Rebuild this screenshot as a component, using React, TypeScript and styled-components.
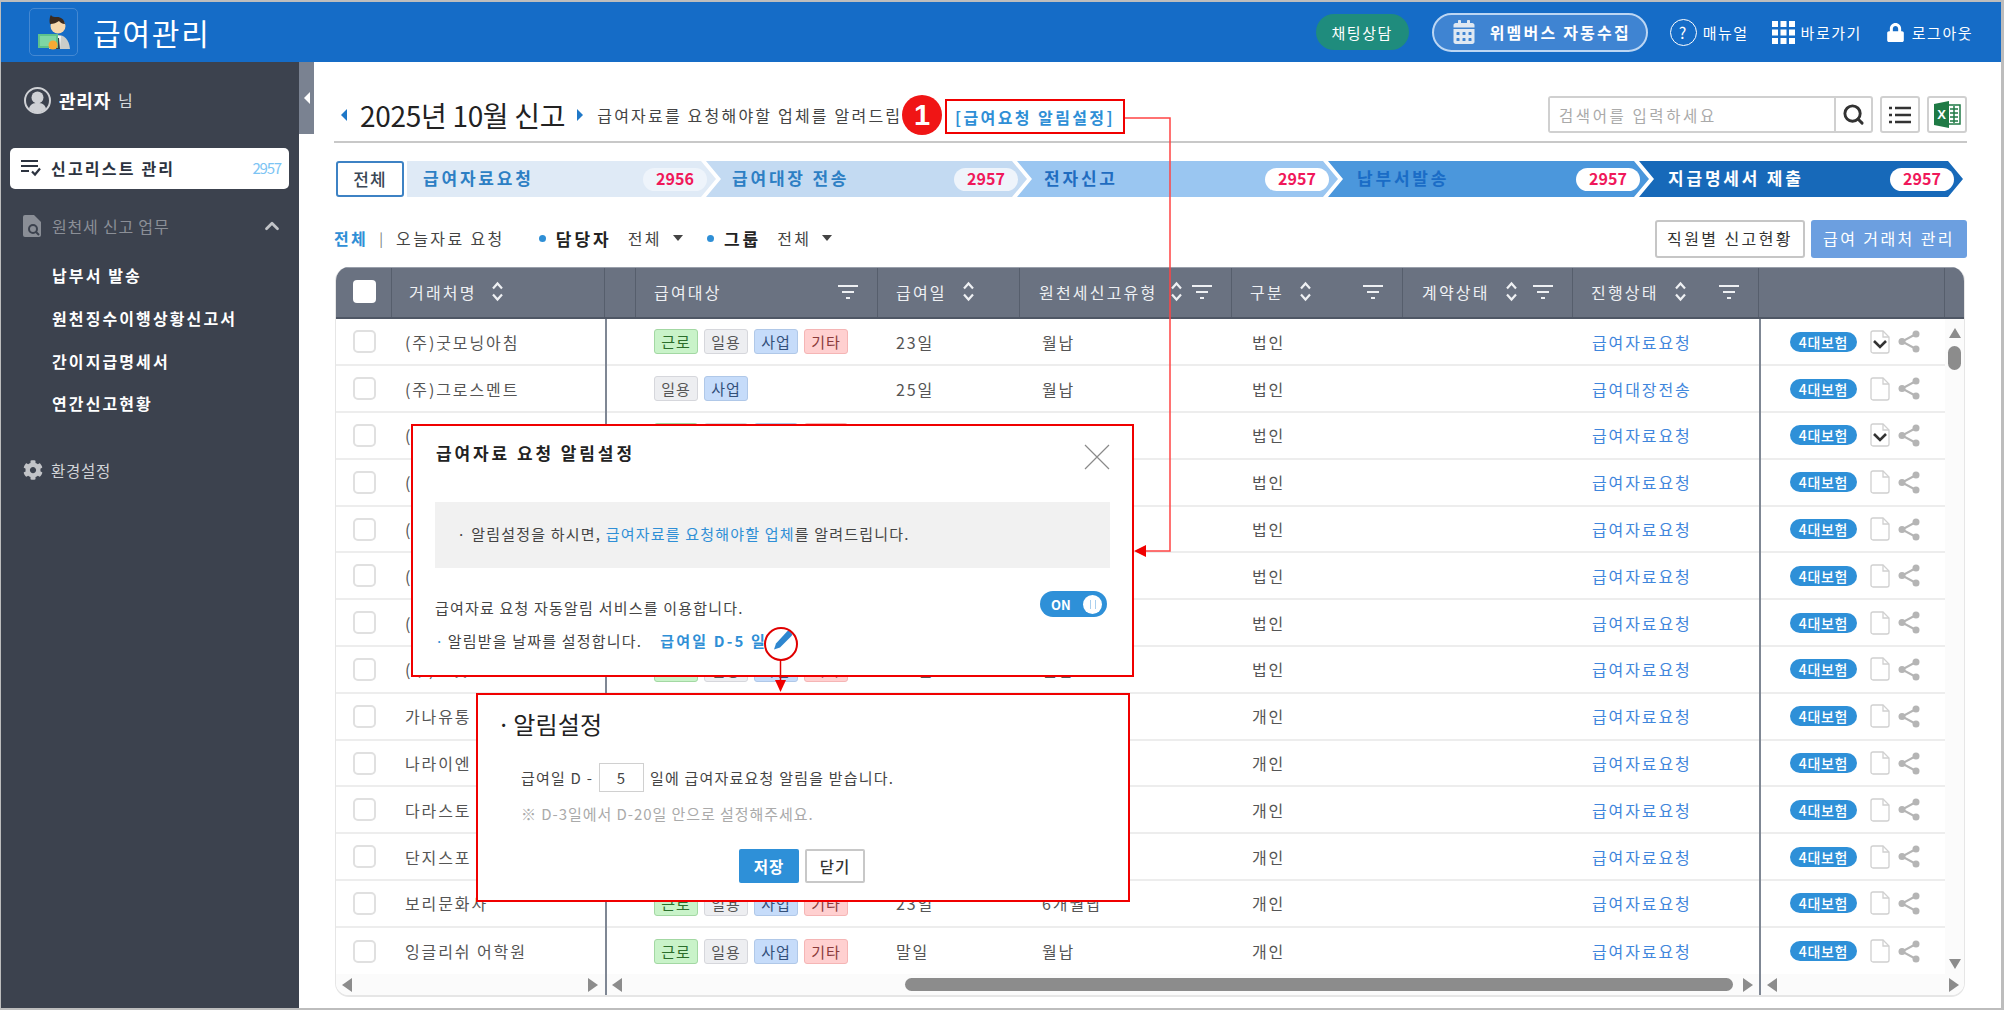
import React from "react";
import styled, { createGlobalStyle } from "styled-components";
import { FaCalendarAlt, FaCog, FaLock } from "react-icons/fa";
import { ChevronUp, Search } from "lucide-react";

const Global = createGlobalStyle`
  html, body { margin: 0; padding: 0; background: #bdbdbd; }
  * { box-sizing: border-box; }
  body { font-family: "Noto Sans CJK KR", "Noto Sans", sans-serif; color: #444; }
`;

const Page = styled.div`
  position: relative;
  width: 2004px;
  height: 1010px;
  padding: 2px 3px 2px 1px;
  overflow: hidden;
  display: flex;
  flex-direction: column;
`;

/* ---------- header ---------- */
const Header = styled.header`
  height: 60px;
  flex: none;
  background: #156cc7;
  display: flex;
  align-items: center;
  padding-left: 28px;
  color: #fff;
`;
const LogoBox = styled.div`
  width: 49px;
  height: 48px;
  border: 1.5px solid #4488d2;
  border-radius: 5px;
  display: flex;
  align-items: center;
  justify-content: center;
`;
const AppTitle = styled.h1`
  margin: 0 0 0 15px;
  font-size: 30px;
  font-weight: 400;
  letter-spacing: 1.8px;
  flex: 1;
`;
const ChatPill = styled.div`
  width: 93px;
  height: 36px;
  border-radius: 18px;
  background: #1f8c7d;
  font-size: 15px;
  letter-spacing: 1.6px;
  display: flex;
  align-items: center;
  justify-content: center;
`;
const CollectButton = styled.div`
  width: 216px;
  height: 39px;
  margin-left: 23px;
  border: 2px solid #bcd6f3;
  border-radius: 20px;
  background: #3f84d2;
  font-size: 16px;
  font-weight: 700;
  letter-spacing: 2.2px;
  white-space: nowrap;
  display: flex;
  align-items: center;
  padding-left: 18px;
  gap: 14px;
`;
const HeaderLink = styled.div<{ $ml: number; $gap: number }>`
  margin-left: ${(p) => p.$ml}px;
  display: flex;
  align-items: center;
  gap: ${(p) => p.$gap}px;
  font-size: 15px;
  letter-spacing: 1.5px;
`;
const HelpCircle = styled.span`
  width: 27px;
  height: 27px;
  border: 1.5px solid #fff;
  border-radius: 50%;
  display: flex;
  align-items: center;
  justify-content: center;
  font-size: 16px;
`;
const HeaderEnd = styled.div`
  width: 28px;
`;

/* ---------- frame ---------- */
const Body = styled.div`
  flex: 1;
  display: flex;
  min-height: 0;
`;
const Sidebar = styled.aside`
  width: 298px;
  flex: none;
  background: #3c424e;
  color: #fff;
  display: flex;
  flex-direction: column;
`;
const UserRow = styled.div`
  margin: 23px 0 0 23px;
  height: 30px;
  display: flex;
  align-items: center;
  gap: 8px;
  b { font-size: 18px; font-weight: 700; letter-spacing: 0.8px; }
  span { color: #d8dade; font-size: 16px; margin-left: -1px; }
`;
const ActiveItem = styled.div`
  margin: 33px 0 0 9px;
  width: 279px;
  height: 41px;
  padding: 0 8px 2px 11px;
  border-radius: 5px;
  background: #fff;
  color: #2c3340;
  display: flex;
  align-items: center;
  gap: 10px;
  font-size: 16px;
  font-weight: 700;
  letter-spacing: 2.2px;
`;
const CountText = styled.span`
  margin-left: auto;
  font-size: 15px;
  font-weight: 400;
  letter-spacing: -1.2px;
  color: #7cc4f4;
`;
const SectionRow = styled.div`
  margin: 25px 0 0 22px;
  width: 260px;
  height: 24px;
  display: flex;
  align-items: center;
  gap: 11px;
  font-size: 16px;
  letter-spacing: 0.8px;
  color: #8b8f97;
  svg:last-child { margin-left: auto; color: #c2c4c8; }
`;
const SubList = styled.div`
  margin: 16px 0 0 51px;
  display: flex;
  flex-direction: column;
`;
const SubItem = styled.div`
  height: 42.7px;
  display: flex;
  align-items: center;
  font-size: 16px;
  font-weight: 700;
  letter-spacing: 2.1px;
`;
const SettingRow = styled.div`
  margin: 33px 0 0 22px;
  height: 24px;
  display: flex;
  align-items: center;
  gap: 8px;
  font-size: 15.5px;
  letter-spacing: 0.7px;
  color: #d2d4d8;
  svg { color: #c2c4c8; }
`;

/* ---------- main ---------- */
const Main = styled.main`
  position: relative;
  flex: 1;
  background: #fff;
  padding: 0 34px 0 35px;
  display: flex;
  flex-direction: column;
`;
const CollapseTab = styled.div`
  position: absolute;
  left: 0;
  top: 0;
  width: 15px;
  height: 72px;
  background: #7a8291;
  display: flex;
  align-items: center;
  justify-content: center;
`;
const TitleBar = styled.div`
  height: 81px;
  flex: none;
  border-bottom: 2px solid #c8c8c8;
  display: flex;
  align-items: flex-end;
  padding-bottom: 8px;
`;
const MonthNav = styled.div`
  height: 37px;
  display: flex;
  align-items: center;
  padding-left: 7px;
`;
const Triangle = styled.span<{ $dir: "l" | "r"; $color?: string; $h?: number; $w?: number }>`
  display: inline-block;
  width: 0;
  height: 0;
  flex: none;
  border-top: ${(p) => (p.$h ?? 12) / 2}px solid transparent;
  border-bottom: ${(p) => (p.$h ?? 12) / 2}px solid transparent;
  ${(p) => (p.$dir === "l" ? "border-right" : "border-left")}: ${(p) => p.$w ?? 6}px solid ${(p) => p.$color ?? "#1f78c8"};
`;
const MonthTitle = styled.div`
  font-size: 28px;
  color: #222;
  margin: 0 12px 0 13px;
  letter-spacing: -0.3px;
`;
const SubTitle = styled.div`
  margin-left: 14px;
  font-size: 16px;
  letter-spacing: 2.2px;
  white-space: nowrap;
  color: #444;
`;
const SearchArea = styled.div`
  margin-left: auto;
  display: flex;
  gap: 7px;
  height: 37px;
`;
const SearchBox = styled.div`
  width: 325px;
  border: 2px solid #d0d0d0;
  border-radius: 3px;
  display: flex;
`;
const SearchInput = styled.input`
  flex: 1;
  min-width: 0;
  border: 0;
  outline: 0;
  padding: 0 0 0 9px;
  font: inherit;
  font-size: 15.5px;
  letter-spacing: 2.6px;
  &::placeholder { color: #aaa; }
`;
const SearchBtn = styled.div`
  width: 37px;
  border-left: 2px solid #d0d0d0;
  display: flex;
  align-items: center;
  justify-content: center;
  color: #333;
`;
const IconBtn = styled.div`
  width: 40px;
  border: 2px solid #d0d0d0;
  border-radius: 3px;
  display: flex;
  align-items: center;
  justify-content: center;
`;

const Steps = styled.div`
  margin: 18px 0 0 2px;
  height: 36px;
  flex: none;
  display: flex;
`;
const AllBtn = styled.div`
  width: 68px;
  margin-right: 3px;
  padding-bottom: 2px;
  border: 2px solid #3d82c4;
  border-radius: 3px;
  display: flex;
  align-items: center;
  justify-content: center;
  font-size: 17px;
  font-weight: 500;
  letter-spacing: 1.2px;
  color: #3a4756;
`;
const Step = styled.div<{ $bg: string; $fg: string; $w: number; $first?: boolean; $pl: number; $last?: boolean }>`
  width: ${(p) => p.$w}px;
  flex: none;
  margin-right: ${(p) => (p.$last ? 0 : -10)}px;
  background: ${(p) => p.$bg};
  color: ${(p) => p.$fg};
  clip-path: ${(p) =>
    p.$first
      ? "polygon(0 0, calc(100% - 15px) 0, 100% 50%, calc(100% - 15px) 100%, 0 100%)"
      : "polygon(0 0, calc(100% - 15px) 0, 100% 50%, calc(100% - 15px) 100%, 0 100%, 15px 50%)"};
  display: flex;
  align-items: center;
  justify-content: space-between;
  padding: 0 9px 0 ${(p) => p.$pl}px;
  font-size: 17px;
  font-weight: 700;
  letter-spacing: 2.8px;
`;
const StepLabel = styled.span`
  margin-bottom: 4px;
`;
const StepBadge = styled.span<{ $soft?: boolean }>`
  width: 64px;
  height: 23px;
  padding-bottom: 2px;
  border-radius: 12px;
  background: ${(p) => (p.$soft ? "#eef4fb" : "#fff")};
  color: #f0185a;
  font-size: 16px;
  font-weight: 700;
  letter-spacing: 0;
  display: flex;
  align-items: center;
  justify-content: center;
`;

const FilterBar = styled.div`
  margin-top: 22px;
  height: 38px;
  flex: none;
  display: flex;
  align-items: center;
  font-size: 16px;
  letter-spacing: 2.4px;
  white-space: nowrap;
  color: #444;
`;
const FilterAll = styled.span`
  color: #2f8fd6;
  font-weight: 700;
`;
const FilterSep = styled.span`
  margin: 0 13px 0 11px;
  color: #777;
  font-size: 14px;
  letter-spacing: 0;
`;
const Dot = styled.span<{ $ml: number }>`
  width: 7px;
  height: 7px;
  margin: 0 10px 0 ${(p) => p.$ml}px;
  border-radius: 50%;
  background: #2f8fd6;
`;
const FilterKey = styled.b`
  color: #222;
  font-size: 17px;
  font-weight: 700;
  letter-spacing: 3px;
`;
const FilterVal = styled.span`
  margin-left: 16px;
  display: flex;
  align-items: center;
  gap: 11px;
`;
const Caret = styled.i`
  width: 0;
  height: 0;
  border-left: 5px solid transparent;
  border-right: 5px solid transparent;
  border-top: 6px solid #444;
`;
const OutlineBtn = styled.div`
  margin: 2px 0 0 auto;
  width: 150px;
  height: 38px;
  padding-bottom: 2px;
  border: 2px solid #c6c6c6;
  border-radius: 3px;
  display: flex;
  align-items: center;
  justify-content: center;
  color: #333;
`;
const SoftBtn = styled.div`
  margin: 2px 0 0 6px;
  width: 156px;
  height: 38px;
  padding-bottom: 2px;
  border-radius: 3px;
  background: #6c9fe0;
  color: #fff;
  display: flex;
  align-items: center;
  justify-content: center;
`;

/* ---------- table ---------- */
const Table = styled.div`
  position: relative;
  margin: 10px 0 0 1px;
  width: 1630px;
  height: 730px;
  flex: none;
  border: 1px solid #e6e6e6;
  border-top: 0;
  border-bottom-width: 2px;
  border-radius: 14px;
  overflow: hidden;
  display: flex;
  flex-direction: column;
`;
const HeadRow = styled.div`
  height: 52px;
  flex: none;
  display: grid;
  grid-template-columns: 56px 213px 31px 242px 142px 212px 171px 170px 186px 186px 19px;
  background: #6a7281;
  border-top: 1px solid #9aa0ab;
  border-bottom: 2px solid #4f5765;
  color: #eef0f3;
  font-size: 16px;
  letter-spacing: 2.2px;
`;
const HeadCell = styled.div<{ $pl?: number; $noline?: boolean }>`
  display: flex;
  align-items: center;
  padding: 0 0 2px ${(p) => p.$pl ?? 0}px;
  border-right: ${(p) => (p.$noline ? "0" : "1px solid #565e6c")};
  white-space: nowrap;
`;
const HeadCheck = styled.span`
  width: 23px;
  height: 23px;
  border-radius: 4px;
  background: #fff;
`;
const SortWrap = styled.span<{ $ml: number }>`
  margin-left: ${(p) => p.$ml}px;
  display: flex;
`;
const FilterWrap = styled.span`
  margin-left: auto;
  margin-right: 19px;
  display: flex;
`;
const BodyArea = styled.div`
  height: 655px;
  flex: none;
  display: flex;
  overflow: hidden;
`;
const Rows = styled.div`
  width: 1609px;
  flex: none;
  margin-top: 0.5px;
  display: flex;
  flex-direction: column;
`;
const Row = styled.div`
  height: 46.8px;
  flex: none;
  display: grid;
  grid-template-columns: 56px 213px 31px 242px 142px 212px 171px 170px 186px 186px;
  align-items: center;
  border-bottom: 2px solid #ededed;
  font-size: 16px;
  letter-spacing: 1.9px;
  color: #555;
  &:last-child { border-bottom: 0; }
`;
const Cell = styled.div<{ $pl?: number }>`
  display: flex;
  align-items: center;
  padding-left: ${(p) => p.$pl ?? 0}px;
  white-space: nowrap;
`;
const RowCheck = styled.span`
  width: 23px;
  height: 23px;
  border: 2px solid #e0e0e0;
  border-radius: 5px;
  background: #fff;
`;
const TagList = styled.div`
  display: flex;
  gap: 6px;
`;
const kinds: Record<string, [string, string, string]> = {
  근로: ["#c9f3c9", "#a3d8a3", "#2b6e2b"],
  일용: ["#edeef1", "#d6d7dc", "#555"],
  사업: ["#c6dcfa", "#b0c8e8", "#33507a"],
  기타: ["#ffd0d0", "#f5b5b5", "#8a3b3b"],
};
const Tag = styled.span<{ $k: string }>`
  width: 44px;
  height: 25px;
  border: 1.5px solid ${(p) => kinds[p.$k][1]};
  border-radius: 3px;
  background: ${(p) => kinds[p.$k][0]};
  color: ${(p) => kinds[p.$k][2]};
  font-size: 15px;
  letter-spacing: 1px;
  display: flex;
  align-items: center;
  justify-content: center;
`;
const StatusLink = styled.span`
  color: #3f86dc;
`;
const InsureBadge = styled.span`
  width: 67px;
  height: 20px;
  border-radius: 10px;
  background: #2e90d8;
  color: #fff;
  font-size: 14px;
  font-weight: 500;
  letter-spacing: 0.7px;
  display: flex;
  align-items: center;
  justify-content: center;
  margin-right: 13px;
`;
const ShareWrap = styled.span`
  margin-left: 8px;
  display: flex;
`;
const VScroll = styled.div`
  flex: 1;
  background: #fbfbfb;
  display: flex;
  flex-direction: column;
  align-items: center;
  padding: 9px 0 5px;
`;
const VThumb = styled.div`
  width: 13px;
  height: 24px;
  margin-top: 8px;
  border-radius: 7px;
  background: #8c8c8c;
`;
const VTriangle = styled.span<{ $down?: boolean }>`
  width: 0;
  height: 0;
  border-left: 6.5px solid transparent;
  border-right: 6.5px solid transparent;
  ${(p) => (p.$down ? "border-top" : "border-bottom")}: 10px solid #8c8c8c;
  ${(p) => (p.$down ? "margin-top: auto;" : "")}
`;
const HScroll = styled.div`
  flex: 1;
  display: grid;
  grid-template-columns: 269px 1154px 205px;
  background: #fbfbfb;
`;
const HSegment = styled.div<{ $pl: number; $pr: number }>`
  display: flex;
  align-items: center;
  justify-content: space-between;
  padding: 0 ${(p) => p.$pr}px 0 ${(p) => p.$pl}px;
`;
const HThumb = styled.div`
  width: 828px;
  height: 13px;
  margin-left: 283px;
  margin-right: 10px;
  border-radius: 7px;
  background: #8c8c8c;
`;
const Divider = styled.div<{ $left: number }>`
  position: absolute;
  top: 52px;
  bottom: 0;
  left: ${(p) => p.$left}px;
  width: 2px;
  background: #7f8794;
`;

/* ---------- dialogs ---------- */
const Dialog = styled.section<{ $l: number; $t: number; $w: number; $h: number }>`
  position: absolute;
  left: ${(p) => p.$l}px;
  top: ${(p) => p.$t}px;
  width: ${(p) => p.$w}px;
  height: ${(p) => p.$h}px;
  border: 2px solid #f00000;
  background: #fff;
  display: flex;
  flex-direction: column;
`;
const DialogHead = styled.div`
  height: 55px;
  padding: 6px 22px 0 23px;
  display: flex;
  align-items: center;
  justify-content: space-between;
`;
const DialogTitle = styled.h2`
  margin: 0 0 8px;
  font-size: 17px;
  font-weight: 700;
  letter-spacing: 2.9px;
  color: #222;
`;
const NoticeBox = styled.div`
  margin: 21px 22px 0;
  height: 66px;
  padding: 0 0 3px 22px;
  background: #f1f1f1;
  display: flex;
  align-items: center;
  font-size: 15px;
  letter-spacing: 1.2px;
  color: #444;
  em { font-style: normal; color: #2f8fd6; }
`;
const ServiceRow = styled.div`
  margin: 23px 25px 0 22px;
  height: 36px;
  display: flex;
  justify-content: space-between;
  font-size: 15px;
  letter-spacing: 1.2px;
  color: #444;
`;
const ServiceText = styled.span`
  margin-top: 6px;
`;
const Toggle = styled.div`
  width: 67px;
  height: 26px;
  border-radius: 13px;
  background: #2e90d8;
  color: #fff;
  font-size: 13px;
  font-weight: 700;
  letter-spacing: 0;
  display: flex;
  align-items: center;
  justify-content: space-between;
  padding: 0 3px 0 11px;
`;
const ToggleKnob = styled.span`
  width: 19px;
  height: 19px;
  border-radius: 50%;
  background: #fff;
  display: flex;
  align-items: center;
  justify-content: center;
  margin-right: 2px;
  &::after {
    content: "";
    width: 4px;
    height: 9px;
    border-left: 1px solid #a9cfee;
    border-right: 1px solid #a9cfee;
  }
`;
const DateRow = styled.div`
  margin: 0 22px;
  display: flex;
  align-items: center;
  font-size: 15px;
  letter-spacing: 1.2px;
  color: #444;
  height: 26px;
`;
const BulletDot = styled.span`
  color: #2f8fd6;
  margin-right: 3px;
`;
const DateValue = styled.b`
  margin-left: 18px;
  color: #2f8fd6;
  font-weight: 700;
  letter-spacing: 2.2px;
`;
const PencilWrap = styled.span`
  margin-left: 6px;
  display: flex;
`;
const SettingTitle = styled.h2`
  margin: 12px 0 0 19px;
  font-size: 24px;
  line-height: 34px;
  font-weight: 400;
  color: #222;
  letter-spacing: 0.2px;
  word-spacing: -3px;
`;
const SettingLine = styled.div`
  margin: 21px 0 0 43px;
  height: 30px;
  display: flex;
  align-items: center;
  gap: 6px;
  font-size: 15px;
  letter-spacing: 1.2px;
  color: #444;
`;
const NumberField = styled.span`
  width: 45px;
  height: 29px;
  border: 1.500px solid #d0d0d0;
  display: flex;
  align-items: center;
  justify-content: center;
`;
const SettingNote = styled.div`
  margin: 6px 0 0 43px;
  height: 30px;
  display: flex;
  align-items: center;
  font-size: 15px;
  letter-spacing: 0.95px;
  color: #aaa;
`;
const ButtonRow = styled.div`
  margin: 21px 0 0 261px;
  display: flex;
  gap: 6px;
`;
const SaveBtn = styled.div`
  width: 60px;
  height: 34px;
  border-radius: 2px;
  background: #2e90d8;
  color: #fff;
  font-size: 15.5px;
  font-weight: 700;
  letter-spacing: 1px;
  display: flex;
  align-items: center;
  justify-content: center;
`;
const CloseBtn = styled.div`
  width: 60px;
  height: 34px;
  border: 2px solid #c8c8c8;
  border-radius: 2px;
  color: #333;
  font-size: 15.5px;
  font-weight: 500;
  letter-spacing: 1px;
  display: flex;
  align-items: center;
  justify-content: center;
`;

/* ---------- annotations ---------- */
const NumberMark = styled.div`
  position: absolute;
  left: 902px;
  top: 95px;
  width: 40px;
  height: 40px;
  border-radius: 50%;
  background: #f01515;
  color: #fff;
  font-family: "Liberation Sans", sans-serif;
  font-size: 29px;
  font-weight: 700;
  display: flex;
  align-items: center;
  justify-content: center;
`;
const MarkBox = styled.div`
  position: absolute;
  left: 945px;
  top: 99px;
  width: 180px;
  height: 35px;
  border: 2.5px solid #f00000;
  background: #fff;
  color: #2f8fd6;
  font-size: 16px;
  font-weight: 700;
  letter-spacing: 2.4px;
  display: flex;
  align-items: center;
  justify-content: center;
  white-space: nowrap;
`;
const ConnectorLayer = styled.svg`
  position: absolute;
  inset: 0;
  pointer-events: none;
`;

/* ---------- icons ---------- */
const Logo = () => (
  <svg width="34" height="36" viewBox="0 0 34 36">
    <path d="M12 35c0-9 3-14 9-14s11 4 12 14z" fill="#c9ccc9" />
    <path d="M18 22h6l-1 13h-4z" fill="#f2f2f2" />
    <path d="M20 24h2l1 11h-4z" fill="#33404a" />
    <circle cx="21" cy="12" r="7.500" fill="#f6d7ad" />
    <path d="M13 10c-1-4 0-8 1-9 1 2 3 2 6 2 4 0 7 2 8 7-3 0-5-2-6-3-3 2-5 3-9 3z" fill="#3a2a20" />
    <rect x="1" y="20" width="20" height="14" fill="#5ec28c" />
    <rect x="3" y="22" width="16" height="10" fill="#7ed6a4" />
    <circle cx="16" cy="31" r="4.500" fill="#f6a933" />
  </svg>
);
const GridIcon = () => (
  <svg width="23" height="23" viewBox="0 0 23 23" fill="#fff">
    {[0, 8.5, 17].map((y) =>
      [0, 8.5, 17].map((x) => <rect key={`${x}-${y}`} x={x} y={y} width="6" height="6" />)
    )}
  </svg>
);
const UserIcon = () => (
  <svg width="27" height="27" viewBox="0 0 27 27">
    <circle cx="13.500" cy="13.500" r="12.500" fill="none" stroke="#cfd1d5" strokeWidth="2" />
    <circle cx="13.500" cy="10.500" r="6" fill="#cfd1d5" />
    <path d="M5 22c1-5 4-6 8.500-6s7.500 1 8.500 6c-2 2-5 3.500-8.500 3.500S7 24 5 22z" fill="#cfd1d5" />
  </svg>
);
const ListCheckIcon = () => (
  <svg width="20" height="18" viewBox="0 0 20 18" stroke="#2c3340" strokeWidth="2.200" fill="none">
    <path d="M0 2h17M0 7h17M0 12h8M11 12.500l3 3 5-6" />
  </svg>
);
const ReportIcon = () => (
  <svg width="18" height="22" viewBox="0 0 18 22">
    <path d="M0 2a2 2 0 0 1 2-2h9l7 7v13a2 2 0 0 1-2 2H2a2 2 0 0 1-2-2z" fill="#8a8e96" />
    <circle cx="10" cy="14" r="4" fill="none" stroke="#3c424e" strokeWidth="2" />
    <path d="M13 17l3 3" stroke="#3c424e" strokeWidth="2" />
  </svg>
);
const ListIcon = () => (
  <svg width="22" height="20" viewBox="0 0 22 20" stroke="#333" strokeWidth="2.400">
    <path d="M0 3h3M6 3h16M0 10h3M6 10h16M0 17h3M6 17h16" />
  </svg>
);
const ExcelIcon = () => (
  <svg width="27" height="27" viewBox="0 0 27 27">
    <rect x="13" y="4" width="13" height="19" fill="#fff" stroke="#1f7a45" strokeWidth="1.500" />
    <path d="M16 8h8M16 12h8M16 16h8M16 20h8M20 5v17" stroke="#1f7a45" strokeWidth="1.500" />
    <path d="M0 3l15-3v27L0 24z" fill="#1f7a45" />
    <text x="7.500" y="18" textAnchor="middle" fontSize="13" fontWeight="700" fontFamily="Liberation Sans" fill="#fff">X</text>
  </svg>
);
const SortIcon = () => (
  <svg width="13" height="21" viewBox="0 0 13 21" fill="none" stroke="#eef0f3" strokeWidth="2.200">
    <path d="M2 7.500l4.500-5 4.500 5M2 13.500l4.500 5 4.500-5" />
  </svg>
);
const FilterIcon = () => (
  <svg width="20" height="15" viewBox="0 0 20 15" stroke="#eef0f3" strokeWidth="2.200">
    <path d="M0 2h20M4 8h12M8 14h4" />
  </svg>
);
const DocIcon = ({ checked }: { checked?: boolean }) => (
  <svg width="20" height="24" viewBox="0 0 20 24" fill="none">
    <path d="M1 3a2 2 0 0 1 2-2h10l6 6v14a2 2 0 0 1-2 2H3a2 2 0 0 1-2-2z" stroke="#d0d0d0" strokeWidth="1.300" fill="#fff" />
    <path d="M13 1v6h6" stroke="#d0d0d0" strokeWidth="1.300" />
    {checked && <path d="M4 11l6 6 6-6" stroke="#333" strokeWidth="2.600" />}
  </svg>
);
const ShareIcon = () => (
  <svg width="22" height="23" viewBox="0 0 22 23" stroke="#b5b5b5" strokeWidth="2" fill="#b5b5b5">
    <path d="M18 4L4 11.500 18 19" fill="none" />
    <circle cx="18" cy="4" r="3.500" stroke="none" />
    <circle cx="4" cy="11.500" r="3.500" stroke="none" />
    <circle cx="18" cy="19" r="3.500" stroke="none" />
  </svg>
);
const PencilIcon = () => (
  <svg width="20" height="20" viewBox="0 0 20 20" fill="#2e86cf">
    <path d="M14 1.500a2 2 0 0 1 2.800 0l1.700 1.700a2 2 0 0 1 0 2.800L7 17.500 1 19.500l2-6z" />
  </svg>
);
const CloseIcon = () => (
  <svg width="26" height="26" viewBox="0 0 26 26" stroke="#8a8a8a" strokeWidth="1.200">
    <path d="M1 1l24 24M25 1L1 25" />
  </svg>
);

/* ---------- data ---------- */
const ALL = ["근로", "일용", "사업", "기타"];
type RowData = {
  name: string; tags: string[]; day: string; pay: string; kind: string; status: string; checked?: boolean;
};
const rows: RowData[] = [
  { name: "(주)굿모닝아침", tags: ALL, day: "23일", pay: "월납", kind: "법인", status: "급여자료요청", checked: true },
  { name: "(주)그로스멘트", tags: ["일용", "사업"], day: "25일", pay: "월납", kind: "법인", status: "급여대장전송" },
  { name: "(주)나무", tags: ALL, day: "25일", pay: "월납", kind: "법인", status: "급여자료요청", checked: true },
  { name: "(주)다솜", tags: ALL, day: "25일", pay: "월납", kind: "법인", status: "급여자료요청" },
  { name: "(주)마루", tags: ALL, day: "25일", pay: "월납", kind: "법인", status: "급여자료요청" },
  { name: "(주)바다", tags: ALL, day: "25일", pay: "월납", kind: "법인", status: "급여자료요청" },
  { name: "(주)사랑", tags: ALL, day: "25일", pay: "월납", kind: "법인", status: "급여자료요청" },
  { name: "(주)한빛", tags: ALL, day: "25일", pay: "월납", kind: "법인", status: "급여자료요청" },
  { name: "가나유통", tags: ALL, day: "25일", pay: "월납", kind: "개인", status: "급여자료요청" },
  { name: "나라이엔", tags: ALL, day: "25일", pay: "월납", kind: "개인", status: "급여자료요청" },
  { name: "다라스토", tags: ALL, day: "25일", pay: "월납", kind: "개인", status: "급여자료요청" },
  { name: "단지스포", tags: ALL, day: "25일", pay: "월납", kind: "개인", status: "급여자료요청" },
  { name: "보리문화사", tags: ALL, day: "23일", pay: "6개월납", kind: "개인", status: "급여자료요청" },
  { name: "잉글리쉬 어학원", tags: ALL, day: "말일", pay: "월납", kind: "개인", status: "급여자료요청" },
];
const steps = [
  { label: "급여자료요청", n: "2956", bg: "#dfeaf6", fg: "#2d7fc4", w: 309, pl: 16, first: true, soft: true },
  { label: "급여대장 전송", n: "2957", bg: "#c3daf2", fg: "#2d7fc4", w: 321, pl: 26, soft: true },
  { label: "전자신고", n: "2957", bg: "#9ac6f1", fg: "#1f6cc0", w: 321, pl: 27 },
  { label: "납부서발송", n: "2957", bg: "#4b97dc", fg: "#1a6cc6", w: 321, pl: 29 },
  { label: "지급명세서 제출", n: "2957", bg: "#1769b9", fg: "#fff", w: 324, pl: 29, last: true },
];

export default function App() {
  return (
    <Page>
      <Global />
      <Header>
        <LogoBox><Logo /></LogoBox>
        <AppTitle>급여관리</AppTitle>
        <ChatPill>채팅상담</ChatPill>
        <CollectButton><FaCalendarAlt size={24} color="#dfe8f2" />위멤버스 자동수집</CollectButton>
        <HeaderLink $ml={22} $gap={6}><HelpCircle>?</HelpCircle>매뉴얼</HeaderLink>
        <HeaderLink $ml={23} $gap={6}><GridIcon />바로가기</HeaderLink>
        <HeaderLink $ml={24} $gap={7}><FaLock size={19} />로그아웃</HeaderLink>
        <HeaderEnd />
      </Header>
      <Body>
        <Sidebar>
          <UserRow><UserIcon /><b>관리자</b><span>님</span></UserRow>
          <ActiveItem><ListCheckIcon />신고리스트 관리<CountText>2957</CountText></ActiveItem>
          <SectionRow><ReportIcon />원천세 신고 업무<ChevronUp size={22} strokeWidth={3} /></SectionRow>
          <SubList>
            <SubItem>납부서 발송</SubItem>
            <SubItem>원천징수이행상황신고서</SubItem>
            <SubItem>간이지급명세서</SubItem>
            <SubItem>연간신고현황</SubItem>
          </SubList>
          <SettingRow><FaCog size={20} />환경설정</SettingRow>
        </Sidebar>
        <Main>
          <CollapseTab><Triangle $dir="l" $color="#fff" $h={12} $w={6} /></CollapseTab>
          <TitleBar>
            <MonthNav>
              <Triangle $dir="l" />
              <MonthTitle>2025년 10월 신고</MonthTitle>
              <Triangle $dir="r" />
              <SubTitle>급여자료를 요청해야할 업체를 알려드립</SubTitle>
            </MonthNav>
            <SearchArea>
              <SearchBox>
                <SearchInput placeholder="검색어를 입력하세요" readOnly />
                <SearchBtn><Search size={23} strokeWidth={3} /></SearchBtn>
              </SearchBox>
              <IconBtn><ListIcon /></IconBtn>
              <IconBtn><ExcelIcon /></IconBtn>
            </SearchArea>
          </TitleBar>
          <Steps>
            <AllBtn>전체</AllBtn>
            {steps.map((s) => (
              <Step key={s.label} $bg={s.bg} $fg={s.fg} $w={s.w} $pl={s.pl} $first={s.first} $last={s.last}>
                <StepLabel>{s.label}</StepLabel>
                <StepBadge $soft={s.soft}>{s.n}</StepBadge>
              </Step>
            ))}
          </Steps>
          <FilterBar>
            <FilterAll>전체</FilterAll>
            <FilterSep>|</FilterSep>
            오늘자료 요청
            <Dot $ml={34} />
            <FilterKey>담당자</FilterKey>
            <FilterVal>전체 <Caret /></FilterVal>
            <Dot $ml={24} />
            <FilterKey>그룹</FilterKey>
            <FilterVal>전체 <Caret /></FilterVal>
            <OutlineBtn>직원별 신고현황</OutlineBtn>
            <SoftBtn>급여 거래처 관리</SoftBtn>
          </FilterBar>
          <Table>
            <HeadRow>
              <HeadCell $pl={17}><HeadCheck /></HeadCell>
              <HeadCell $pl={17}>거래처명<SortWrap $ml={14}><SortIcon /></SortWrap></HeadCell>
              <HeadCell />
              <HeadCell $pl={18}>급여대상<FilterWrap><FilterIcon /></FilterWrap></HeadCell>
              <HeadCell $pl={18}>급여일<SortWrap $ml={15}><SortIcon /></SortWrap></HeadCell>
              <HeadCell $pl={19}>원천세신고유형<SortWrap $ml={13}><SortIcon /></SortWrap><FilterWrap><FilterIcon /></FilterWrap></HeadCell>
              <HeadCell $pl={18}>구분<SortWrap $ml={15}><SortIcon /></SortWrap><FilterWrap><FilterIcon /></FilterWrap></HeadCell>
              <HeadCell $pl={19}>계약상태<SortWrap $ml={15}><SortIcon /></SortWrap><FilterWrap><FilterIcon /></FilterWrap></HeadCell>
              <HeadCell $pl={18}>진행상태<SortWrap $ml={15}><SortIcon /></SortWrap><FilterWrap><FilterIcon /></FilterWrap></HeadCell>
              <HeadCell />
              <HeadCell $noline />
            </HeadRow>
            <BodyArea>
              <Rows>
                {rows.map((r) => (
                  <Row key={r.name}>
                    <Cell $pl={17}><RowCheck /></Cell>
                    <Cell $pl={13}>{r.name}</Cell>
                    <Cell />
                    <Cell $pl={18}>
                      <TagList>{r.tags.map((t) => <Tag key={t} $k={t}>{t}</Tag>)}</TagList>
                    </Cell>
                    <Cell $pl={18}>{r.day}</Cell>
                    <Cell $pl={22}>{r.pay}</Cell>
                    <Cell $pl={20}>{r.kind}</Cell>
                    <Cell />
                    <Cell $pl={19}><StatusLink>{r.status}</StatusLink></Cell>
                    <Cell $pl={31}>
                      <InsureBadge>4대보험</InsureBadge>
                      <DocIcon checked={r.checked} />
                      <ShareWrap><ShareIcon /></ShareWrap>
                    </Cell>
                  </Row>
                ))}
              </Rows>
              <VScroll>
                <VTriangle />
                <VThumb />
                <VTriangle $down />
              </VScroll>
            </BodyArea>
            <HScroll>
              <HSegment $pl={6} $pr={7}>
                <Triangle $dir="l" $color="#8c8c8c" $w={10} $h={14} />
                <Triangle $dir="r" $color="#8c8c8c" $w={10} $h={14} />
              </HSegment>
              <HSegment $pl={7} $pr={6}>
                <Triangle $dir="l" $color="#8c8c8c" $w={10} $h={14} />
                <HThumb />
                <Triangle $dir="r" $color="#8c8c8c" $w={10} $h={14} />
              </HSegment>
              <HSegment $pl={8} $pr={5}>
                <Triangle $dir="l" $color="#8c8c8c" $w={10} $h={14} />
                <Triangle $dir="r" $color="#8c8c8c" $w={10} $h={14} />
              </HSegment>
            </HScroll>
            <Divider $left={269} />
            <Divider $left={1423} />
          </Table>
        </Main>
      </Body>

      <Dialog $l={411} $t={424} $w={723} $h={253}>
        <DialogHead>
          <DialogTitle>급여자료 요청 알림설정</DialogTitle>
          <CloseIcon />
        </DialogHead>
        <NoticeBox>· 알림설정을 하시면,&nbsp;<em>급여자료를 요청해야할 업체</em>를 알려드립니다.</NoticeBox>
        <ServiceRow>
          <ServiceText>급여자료 요청 자동알림 서비스를 이용합니다.</ServiceText>
          <Toggle>ON<ToggleKnob /></Toggle>
        </ServiceRow>
        <DateRow>
          <BulletDot>·</BulletDot>알림받을 날짜를 설정합니다.
          <DateValue>급여일 D-5 일</DateValue>
          <PencilWrap><PencilIcon /></PencilWrap>
        </DateRow>
      </Dialog>

      <Dialog $l={476} $t={693} $w={654} $h={209}>
        <SettingTitle>· 알림설정</SettingTitle>
        <SettingLine>급여일 D - <NumberField>5</NumberField> 일에 급여자료요청 알림을 받습니다.</SettingLine>
        <SettingNote>※ D-3일에서 D-20일 안으로 설정해주세요.</SettingNote>
        <ButtonRow>
          <SaveBtn>저장</SaveBtn>
          <CloseBtn>닫기</CloseBtn>
        </ButtonRow>
      </Dialog>

      <ConnectorLayer width="2004" height="1010" viewBox="0 0 2004 1010">
        <path d="M1125 118H1170V551H1140" fill="none" stroke="#f44" strokeWidth="1.500" />
        <path d="M1134 551l12-6v12z" fill="#f00000" />
        <ellipse cx="781" cy="644" rx="16" ry="16" fill="none" stroke="#e00000" strokeWidth="2" />
        <path d="M780.500 660V682" fill="none" stroke="#e00000" strokeWidth="1.500" />
        <path d="M780.500 692l-5.500-12h11z" fill="#f00000" />
      </ConnectorLayer>
      <NumberMark>1</NumberMark>
      <MarkBox>[급여요청 알림설정]</MarkBox>
    </Page>
  );
}
